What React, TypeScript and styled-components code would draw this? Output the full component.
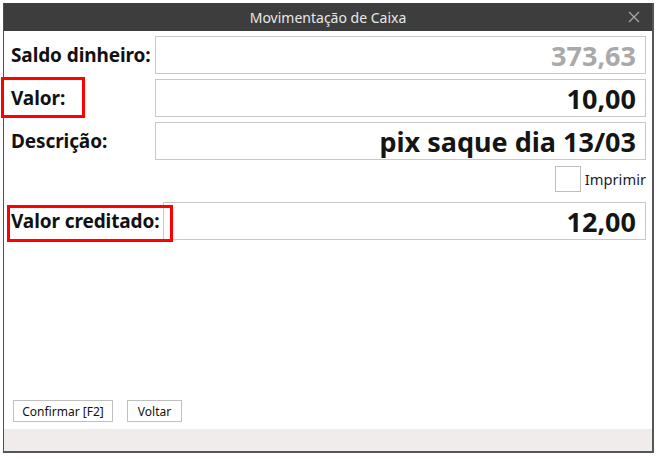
import React from "react";
import styled, { createGlobalStyle } from "styled-components";

const Global = createGlobalStyle`
  html, body { margin: 0; padding: 0; }
  body {
    width: 658px;
    height: 462px;
    overflow: hidden;
    background: #ffffff;
    font-family: "Noto Sans", "Open Sans", sans-serif;
  }
`;

const Desktop = styled.div`
  position: relative;
  width: 658px;
  height: 462px;
  padding: 3px 0 0 3px;
  box-sizing: border-box;
  background: #ffffff;
`;

const Window = styled.div`
  width: 651px;
  height: 450px;
  box-sizing: border-box;
  border-left: 1px solid #505050;
  border-right: 2px solid #555555;
  border-bottom: 2px solid #555555;
  display: flex;
  flex-direction: column;
  background: #ffffff;
`;

const TitleBar = styled.div`
  height: 28px;
  flex: none;
  background: #3d3d3d;
  display: flex;
  align-items: center;
  justify-content: center;
  position: relative;
  color: #e8e8e8;
  font-size: 14px;
`;

const CloseButton = styled.span`
  position: absolute;
  right: 10px;
  top: 6px;
  width: 16px;
  height: 16px;
  display: flex;
  align-items: center;
  justify-content: center;
`;

const Body = styled.div`
  flex: 1;
  display: flex;
  flex-direction: column;
  padding: 5px 6px 0 7px;
`;

const Row = styled.div<{ $mt?: number }>`
  position: relative;
  display: flex;
  align-items: stretch;
  gap: 3px;
  margin-top: ${(p) => p.$mt ?? 0}px;
`;

const Label = styled.div`
  min-width: 141px;
  display: flex;
  align-items: center;
  font-weight: 700;
  font-size: 19px;
  letter-spacing: -0.1px;
  color: #111111;
  white-space: nowrap;
`;

const Field = styled.div<{ $muted?: boolean }>`
  flex: 1;
  height: 38px;
  box-sizing: border-box;
  border: 1px solid #c8c8c8;
  display: flex;
  align-items: center;
  justify-content: flex-end;
  padding-right: 9px;
  font-weight: 700;
  font-size: 27px;
  color: ${(p) => (p.$muted ? "#a9a9a9" : "#151515")};
  white-space: nowrap;
  overflow: hidden;
`;

const Highlight = styled.div<{ $l: number; $t: number; $w: number; $h: number }>`
  position: absolute;
  left: ${(p) => p.$l}px;
  top: ${(p) => p.$t}px;
  width: ${(p) => p.$w}px;
  height: ${(p) => p.$h}px;
  box-sizing: border-box;
  border: 3px solid #ff0000;
  pointer-events: none;
`;

const CheckRow = styled.div`
  display: flex;
  justify-content: flex-end;
  align-items: center;
  gap: 4px;
  margin-top: 6px;
`;

const CheckBox = styled.span`
  width: 26px;
  height: 26px;
  box-sizing: border-box;
  border: 1px solid #bdbdbd;
  background: #ffffff;
`;

const CheckText = styled.span`
  font-size: 14.7px;
  color: #1b1b2a;
`;

const Spacer = styled.div`
  flex: 1;
`;

const Buttons = styled.div`
  display: flex;
  gap: 14px;
  padding: 0 0 7px 2px;
`;

const Button = styled.button<{ $w: number }>`
  width: ${(p) => p.$w}px;
  height: 22px;
  box-sizing: border-box;
  border: 1px solid #bfbfbf;
  background: #ffffff;
  font-family: "Noto Sans", "Open Sans", sans-serif;
  font-size: 12px;
  color: #111111;
  padding: 0;
`;

const Footer = styled.div`
  height: 22px;
  flex: none;
  background: #efeceb;
`;

export default function App() {
  return (
    <>
      <Global />
      <Desktop>
        <Window>
          <TitleBar>
            Movimentação de Caixa
            <CloseButton>
              <svg width="12" height="12" viewBox="0 0 12 12">
                <path d="M1 1 L11 11 M11 1 L1 11" stroke="#a8a8a8" strokeWidth="1.3" />
              </svg>
            </CloseButton>
          </TitleBar>
          <Body>
            <Row>
              <Label>Saldo dinheiro:</Label>
              <Field $muted>373,63</Field>
            </Row>
            <Row $mt={5}>
              <Label>Valor:</Label>
              <Field>10,00</Field>
              <Highlight $l={-10} $t={-2} $w={84} $h={41} />
            </Row>
            <Row $mt={5}>
              <Label>Descrição:</Label>
              <Field>pix saque dia 13/03</Field>
            </Row>
            <CheckRow>
              <CheckBox />
              <CheckText>Imprimir</CheckText>
            </CheckRow>
            <Row $mt={10}>
              <Label>Valor creditado:</Label>
              <Field>12,00</Field>
              <Highlight $l={-4} $t={3} $w={166} $h={37} />
            </Row>
            <Spacer />
            <Buttons>
              <Button $w={100}>Confirmar [F2]</Button>
              <Button $w={55}>Voltar</Button>
            </Buttons>
          </Body>
          <Footer />
        </Window>
      </Desktop>
    </>
  );
}
